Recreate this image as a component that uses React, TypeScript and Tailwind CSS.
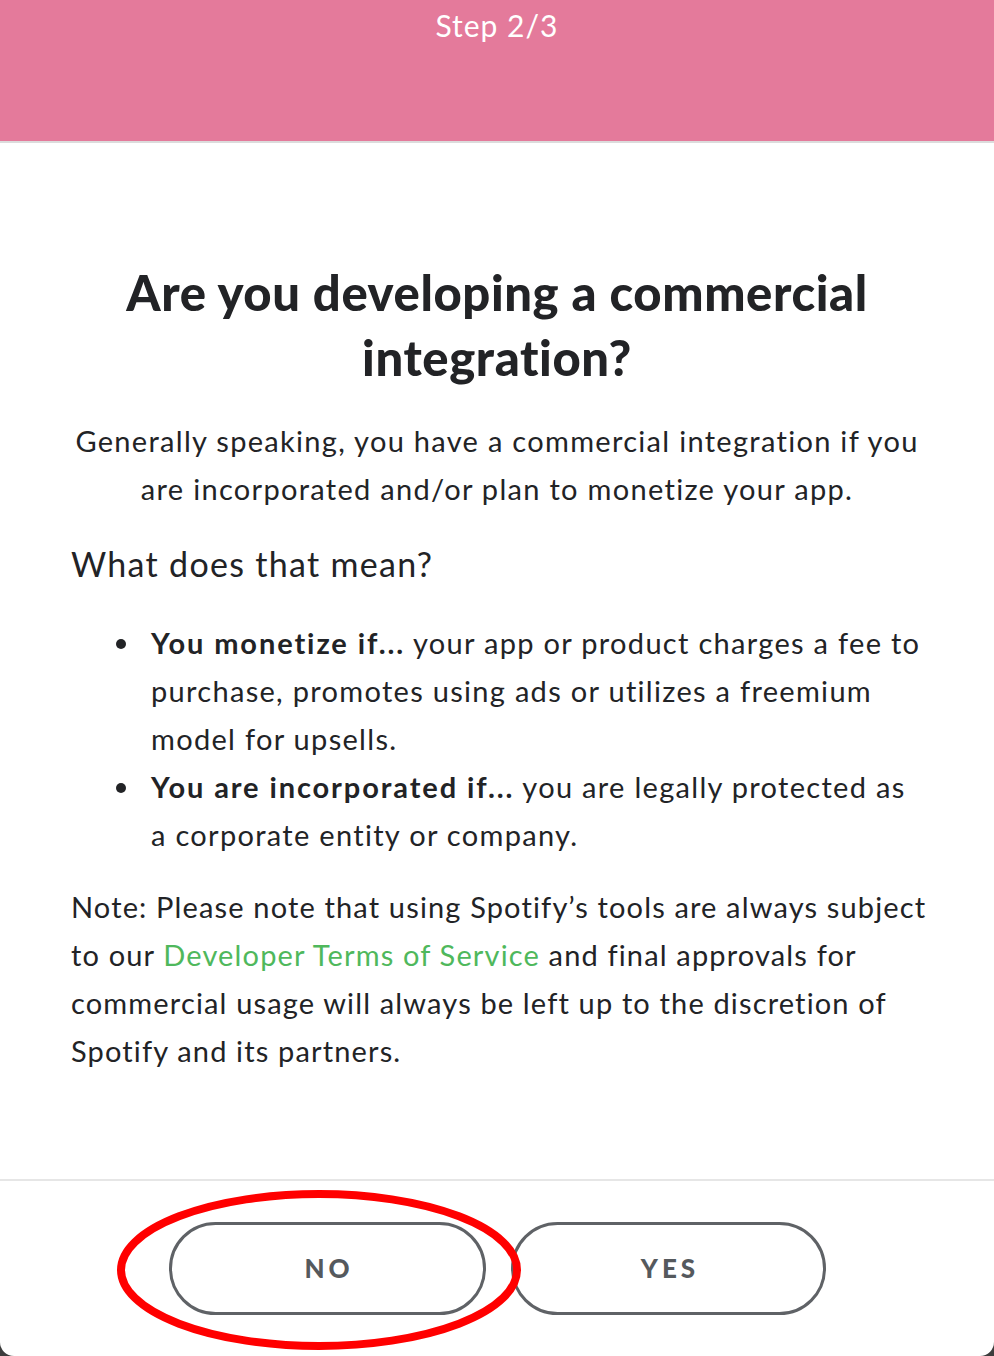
import React from "react";

export default function App() {
  const font = { fontFamily: "Lato, 'Noto Sans', sans-serif" };
  return (
    <div className="w-[994px] h-[1356px] bg-[#3d3d3d] overflow-hidden" style={font}>
      <div className="relative w-full h-full bg-white rounded-b-[14px] flex flex-col">
        <div className="h-[141px] bg-[#e47a9b] border-b-2 border-[#dcdcdc] box-content flex justify-center">
          <div className="mt-[7px] text-white text-[30px] leading-[36px] tracking-[1px]">Step 2/3</div>
        </div>

        <div className="px-[71px] pt-[117px] text-[#222326]">
          <h1 className="text-center font-black text-[49px] leading-[65px] tracking-[0.6px] whitespace-nowrap">
            Are you developing a commercial
            <br />
            integration?
          </h1>
          <p className="mt-[27px] text-center text-[29px] leading-[48px] tracking-[1.3px] whitespace-nowrap">
            Generally speaking, you have a commercial integration if you
            <br />
            are incorporated and/or plan to monetize your app.
          </p>
          <h2 className="mt-[27px] text-[34px] leading-[48px] tracking-[1.3px] whitespace-nowrap">What does that mean?</h2>
          <ul className="mt-[31px] text-[29px] leading-[48px] tracking-[1.3px]">
            <li className="flex">
              <span className="w-[80px] flex justify-center pt-[20px] shrink-0">
                <span className="w-[10px] h-[10px] rounded-full bg-[#222326] ml-[20px]" />
              </span>
              <span className="whitespace-nowrap">
                <b className="font-bold tracking-[1.9px]">You monetize if...</b> your app or product charges a fee to
                <br />
                purchase, promotes using ads or utilizes a freemium
                <br />
                model for upsells.
              </span>
            </li>
            <li className="flex">
              <span className="w-[80px] flex justify-center pt-[20px] shrink-0">
                <span className="w-[10px] h-[10px] rounded-full bg-[#222326] ml-[20px]" />
              </span>
              <span className="whitespace-nowrap">
                <b className="font-bold tracking-[1.9px]">You are incorporated if...</b> you are legally protected as
                <br />
                a corporate entity or company.
              </span>
            </li>
          </ul>
          <p className="mt-[24px] text-[29px] leading-[48px] tracking-[1.15px] whitespace-nowrap">
            Note: Please note that using Spotify’s tools are always subject
            <br />
            to our <a className="text-[#4fb85c]">Developer Terms of Service</a> and final approvals for
            <br />
            commercial usage will always be left up to the discretion of
            <br />
            Spotify and its partners.
          </p>
        </div>

        <div className="mt-auto border-t-2 border-[#e6e6e6] h-[177px] flex justify-center items-start pt-[41px] gap-[25px]">
          <button className="w-[317px] h-[93px] rounded-full border-[3px] border-[#5f6266] text-[#55595d] font-black text-[26px] tracking-[4px] pl-[4px]">
            NO
          </button>
          <button className="w-[315px] h-[93px] rounded-full border-[3px] border-[#5f6266] text-[#55595d] font-black text-[26px] tracking-[4px] pl-[4px]">
            YES
          </button>
        </div>

        <svg className="absolute left-[112px] top-[1186px] pointer-events-none" width="416" height="170" viewBox="0 0 416 170">
          <ellipse cx="207" cy="84" rx="198" ry="76" fill="none" stroke="#ff0000" strokeWidth="8" />
        </svg>
      </div>
    </div>
  );
}
